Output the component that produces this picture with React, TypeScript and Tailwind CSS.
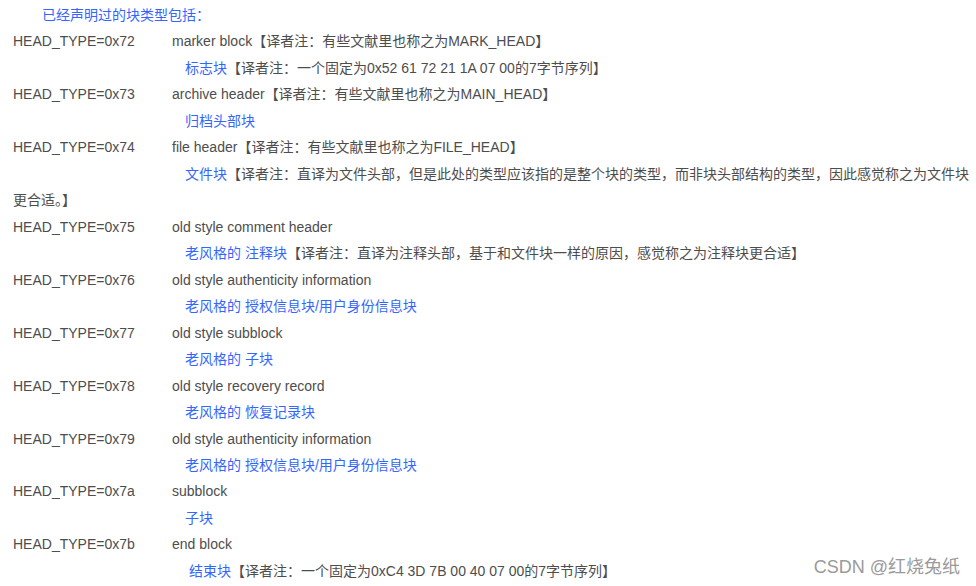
const entries: { code: string; name: string; zh: string; note?: string; indent?: string }[] = [
  { code: "0x72", name: "marker block", zh: "标志块", note: "【译者注：一个固定为0x52 61 72 21 1A 07 00的7字节序列】" },
  { code: "0x73", name: "archive header", zh: "归档头部块" },
  {
    code: "0x74",
    name: "file header",
    zh: "文件块",
    note: "【译者注：直译为文件头部，但是此处的类型应该指的是整个块的类型，而非块头部结构的类型，因此感觉称之为文件块更合适。】",
  },
  { code: "0x75", name: "old style comment header", zh: "老风格的 注释块", note: "【译者注：直译为注释头部，基于和文件块一样的原因，感觉称之为注释块更合适】" },
  { code: "0x76", name: "old style authenticity information", zh: "老风格的 授权信息块/用户身份信息块" },
  { code: "0x77", name: "old style subblock", zh: "老风格的 子块" },
  { code: "0x78", name: "old style recovery record", zh: "老风格的 恢复记录块" },
  { code: "0x79", name: "old style authenticity information", zh: "老风格的 授权信息块/用户身份信息块" },
  { code: "0x7a", name: "subblock", zh: "子块" },
  { code: "0x7b", name: "end block", zh: "结束块", note: "【译者注：一个固定为0xC4 3D 7B 00 40 07 00的7字节序列】", indent: "indent-[176px]" },
];

const englishNotes: Record<string, string> = {
  "0x72": "【译者注：有些文献里也称之为MARK_HEAD】",
  "0x73": "【译者注：有些文献里也称之为MAIN_HEAD】",
  "0x74": "【译者注：有些文献里也称之为FILE_HEAD】",
};

export default function App() {
  return (
    <div className="relative h-[586px] w-[976px] overflow-hidden bg-white font-['Liberation_Sans','Noto_Sans_CJK_SC',sans-serif] text-[14px] leading-[26.47px] text-[#4d4d4d]">
      <div className="w-[976px] pl-[13px] pt-[2px]">
        <p className="indent-[29px] text-[#3366ff]">已经声明过的块类型包括：</p>
        {entries.map((e) => (
          <div key={e.code}>
            <div className="flex">
              <span className="w-[159px] shrink-0">HEAD_TYPE={e.code}</span>
              <span>
                {e.name}
                {englishNotes[e.code]}
              </span>
            </div>
            <p className={e.indent ?? "indent-[172px]"}>
              <span className="text-[#3366ff]">{e.zh}</span>
              {e.note}
            </p>
          </div>
        ))}
      </div>
      <div className="absolute right-[16px] top-[554px] font-['Liberation_Sans','Noto_Sans_CJK_SC',sans-serif] text-[18px] leading-[26px] text-[#9a9a9a] [text-shadow:0_0_2px_#fff]">
        CSDN @红烧兔纸
      </div>
    </div>
  );
}
